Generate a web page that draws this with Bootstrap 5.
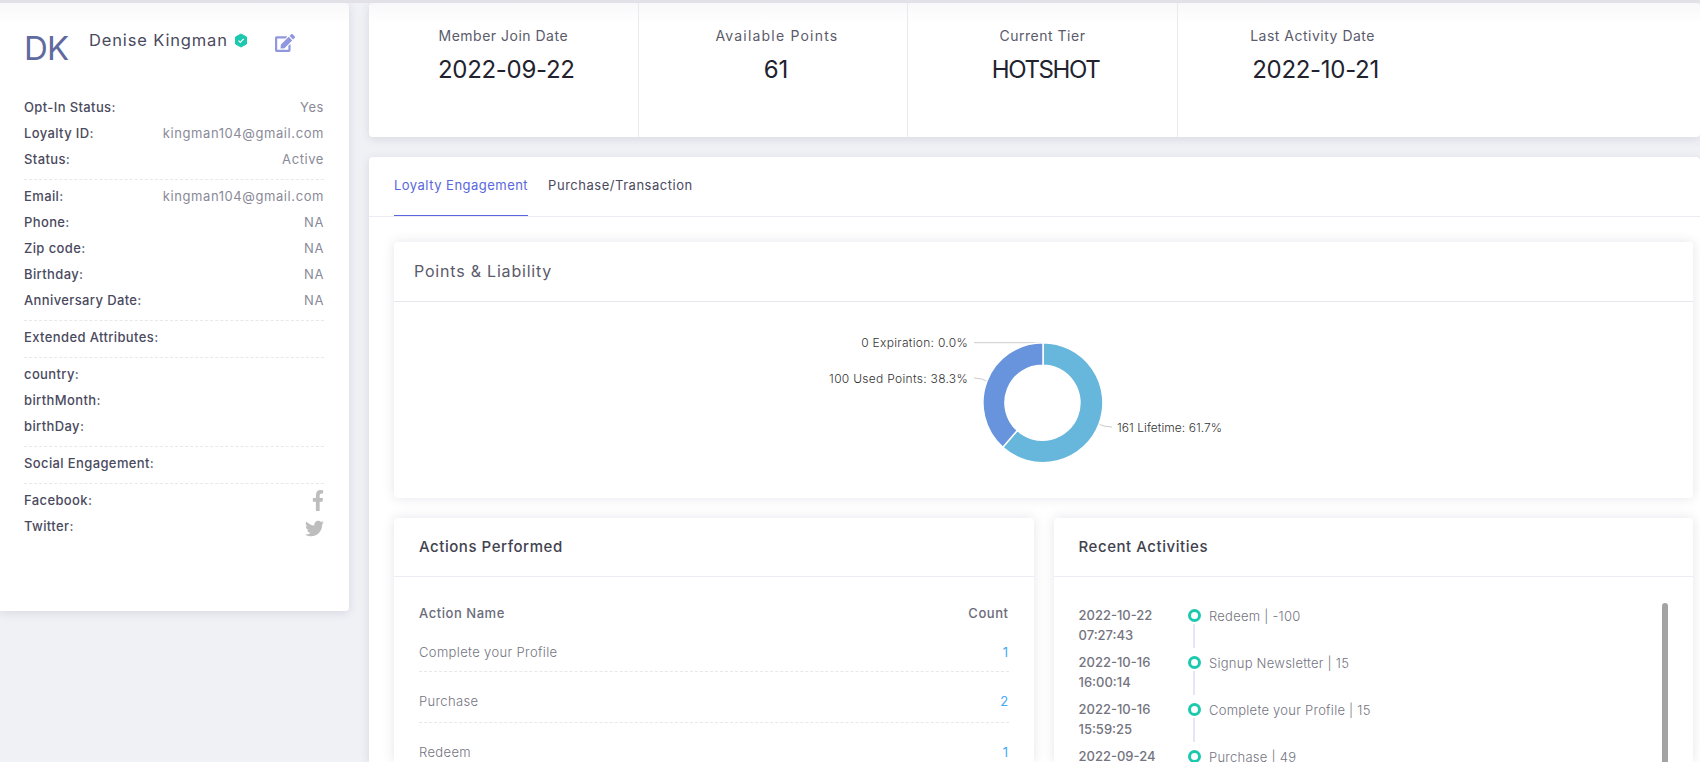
<!DOCTYPE html>
<html lang="en"><head><meta charset="utf-8"><title>Member</title>
<link href="https://cdn.jsdelivr.net/npm/bootstrap@5.3.0/dist/css/bootstrap.min.css" rel="stylesheet">
<style>
html,body{height:762px;overflow:hidden}
body{background:#f0f1f5;font-family:Inter,"Noto Sans",sans-serif;font-size:13px;color:#4a4a5e;border-top:3px solid #e1e1e7}
.shell{gap:20px;align-items:flex-start;height:759px}
.panel{background:#fff;border-radius:4px;box-shadow:0 2px 10px rgba(70,70,110,.14);position:relative}
.panel-fade{background:linear-gradient(#f8f8fa,#fff 20px)}
.side{width:349px;height:608px;flex:none;padding:0 25px 0 24px;border-radius:0 4px 4px 0}
.side-head{height:91px;position:relative}
.initials{font-size:33px;line-height:1;color:#5f6a9e;padding-top:29px;letter-spacing:-.7px;width:65px}
.who{font-size:16.500px;letter-spacing:.85px;color:#4a4a5e;padding-top:25px;width:186px;font-weight:400;white-space:nowrap}
.who svg{vertical-align:-2px;margin-left:1px}
.edit{margin-top:31px}
.info{height:26px;line-height:26px;font-weight:500;color:#4a4a5e;letter-spacing:.38px}
.info span{font-weight:400;color:#8a8a98;letter-spacing:.58px}
.bird{margin-top:4px}
.sect{border-bottom:1px dashed #e8e8ec;padding-bottom:7px;margin-bottom:3px}
.main{flex:1;min-width:0;height:759px}
.stats{height:134px}
.stat{width:269.600px;height:134px;border-right:1px solid #e9e9ee;text-align:center;padding-top:21px}
.stat:last-child{border-right:0}
.stat-label{font-size:14px;line-height:24px;color:#5b5b6b;letter-spacing:.5px}
.label-nudge{padding-left:8px;letter-spacing:1.200px}
.stat-value{font-size:24px;line-height:36px;color:#22222e;margin-top:4px;padding-left:6px;letter-spacing:-.3px}
.value-tight{letter-spacing:-1.400px}
.tabs-card{margin-top:20px;height:605px;border-radius:4px 4px 0 0;overflow:hidden}
.tabbar{height:60px;border-bottom:1px solid #ebedf3;padding-left:25px;gap:20px}
.tabitem{height:59px;line-height:56px;font-size:13px;color:#4a4a5e;letter-spacing:.52px}
.tabitem.on{color:#5867dd;border-bottom:1px solid #5867dd;letter-spacing:.48px}
.inner{padding:25px 7px 0 25px}
.box{background:#fff;border-radius:4px;box-shadow:0 0 12px rgba(70,70,110,.14)}
.points{height:256px;margin-bottom:20px}
.points-head{height:60px;line-height:59px;font-size:16px;letter-spacing:.8px;padding-left:20px;border-bottom:1px solid #e6e7ec;color:#5b5b6b}
.donut{display:block;margin:18px auto 0}
.donut text{font-family:Inter,"Noto Sans",sans-serif;font-size:12px;font-weight:300;fill:#333;letter-spacing:.3px}
.donut .slice-text{letter-spacing:.05px}
.duo{gap:20px}
.half{flex:1 1 0;min-width:0;height:244px;overflow:hidden;border-radius:4px 4px 0 0}
.half-head{height:59px;line-height:57px;font-size:15px;font-weight:500;letter-spacing:.55px;padding-left:25px;border-bottom:1px solid #ebedf3;color:#42424f}
.act-top{padding:24px 25px 0;font-weight:500;color:#6b6b7a;line-height:24px;letter-spacing:.55px;margin-bottom:-2px}
.act-row{margin:0 25px;height:51px;padding-top:19px;line-height:20px;border-bottom:1px dashed #e8e8ec;font-weight:300;color:#74747f;letter-spacing:.36px}
.act-top + .act-row{height:49px}
.act-row b{font-weight:400;color:#44a8f5}
.act-row:last-child{border-bottom:0}
.feed{padding:26px 25px 0;position:relative;height:185px}
.feed-row{height:47px}
.feed-when{width:109.500px;line-height:20px;font-weight:500;color:#74747f;padding-top:2px}
.feed-dot{width:13px;height:13px;border:3.500px solid #1dc9ae;border-radius:50%;margin-top:6px;margin-right:8px;position:relative;flex:none}
.feed-dot::after{content:"";position:absolute;left:1.500px;top:12px;width:2px;height:24px;background:#e4e6f5}
.feed-what{font-weight:300;color:#74747f;padding-top:4px;letter-spacing:.25px}
.thumb{position:absolute;right:25px;top:26px;width:6px;height:159px;background:#a3a3a3;border-radius:3px 3px 0 0}
</style></head>
<body>
<div class="d-flex shell">
<aside class="panel panel-fade side">
  <div class="side-head d-flex">
    <div class="initials">DK</div>
    <div class="who">Denise Kingman <svg width="14" height="15" viewBox="0 0 14 15"><path d="M7 1 12.500 4V11L7 14 1.500 11V4Z" fill="#1dc9ae" stroke="#1dc9ae" stroke-width="1" stroke-linejoin="round"/><path d="M4.500 7.600 6.300 9.300 9.600 5.800" fill="none" stroke="#fff" stroke-width="1.200"/></svg></div>
    <svg class="edit" width="20" height="18" viewBox="0 0 576 512"><path fill="#9197df" d="M402.6 83.2l90.2 90.2c3.8 3.8 3.8 10 0 13.8L274.4 405.6l-92.8 10.3c-12.4 1.400-22.900-9.100-21.500-21.500l10.300-92.800L388.800 83.200c3.800-3.800 10-3.800 13.800 0zm162-22.900l-48.800-48.800c-15.200-15.200-39.900-15.200-55.200 0l-35.400 35.400c-3.800 3.800-3.800 10 0 13.800l90.200 90.200c3.800 3.800 10 3.800 13.800 0l35.400-35.400c15.200-15.300 15.200-40 0-55.200zM384 346.200V448H64V128h229.800c3.200 0 6.200-1.300 8.500-3.500l40-40c7.600-7.600 2.200-20.500-8.500-20.500H48C21.500 64 0 85.500 0 112v352c0 26.500 21.500 48 48 48h352c26.500 0 48-21.500 48-48V306.200c0-10.700-12.900-16-20.500-8.500l-40 40c-2.200 2.300-3.500 5.300-3.500 8.500z"/></svg>
  </div>
  <div class="sect">
    <div class="info d-flex justify-content-between">Opt-In Status:<span>Yes</span></div>
    <div class="info d-flex justify-content-between">Loyalty ID:<span>kingman104@gmail.com</span></div>
    <div class="info d-flex justify-content-between">Status:<span>Active</span></div>
  </div>
  <div class="sect">
    <div class="info d-flex justify-content-between">Email:<span>kingman104@gmail.com</span></div>
    <div class="info d-flex justify-content-between">Phone:<span>NA</span></div>
    <div class="info d-flex justify-content-between">Zip code:<span>NA</span></div>
    <div class="info d-flex justify-content-between">Birthday:<span>NA</span></div>
    <div class="info d-flex justify-content-between">Anniversary Date:<span>NA</span></div>
  </div>
  <div class="sect"><div class="info">Extended Attributes:</div></div>
  <div class="sect">
    <div class="info">country:</div>
    <div class="info">birthMonth:</div>
    <div class="info">birthDay:</div>
  </div>
  <div class="sect"><div class="info">Social Engagement:</div></div>
  <div class="info d-flex justify-content-between align-items-center">Facebook:<svg width="12" height="21" viewBox="0 0 320 512" preserveAspectRatio="none"><path fill="#bdbdbd" d="M279.14 288l14.220-92.660h-88.910v-60.130c0-25.350 12.420-50.060 52.240-50.060h40.420V6.260S260.430 0 225.360 0c-73.220 0-121.080 44.380-121.080 124.720v70.620H22.890V288h81.390v224h100.170V288z"/></svg></div>
  <div class="info d-flex justify-content-between align-items-center">Twitter:<svg class="bird" width="19" height="19" viewBox="0 0 512 512"><path fill="#bdbdbd" d="M459.370 151.716c.325 4.548.325 9.097.325 13.645 0 138.720-105.583 298.558-298.558 298.558-59.452 0-114.680-17.219-161.137-47.106 8.447.974 16.568 1.299 25.340 1.299 49.055 0 94.213-16.568 130.274-44.832-46.132-.975-84.792-31.188-98.112-72.772 6.498.974 12.995 1.624 19.818 1.624 9.421 0 18.843-1.300 27.614-3.573-48.081-9.747-84.143-51.980-84.143-102.985v-1.299c13.969 7.797 30.214 12.670 47.431 13.319-28.264-18.843-46.781-51.005-46.781-87.391 0-19.492 5.197-37.360 14.294-52.954 51.655 63.675 129.300 105.258 216.365 109.807-1.624-7.797-2.599-15.918-2.599-24.040 0-57.828 46.782-104.934 104.934-104.934 30.213 0 57.502 12.670 76.670 33.137 23.715-4.548 46.456-13.320 66.599-25.340-7.798 24.366-24.366 44.833-46.132 57.827 21.117-2.273 41.584-8.122 60.426-16.243-14.292 20.791-32.161 39.308-52.628 54.253z"/></svg></div>
</aside>
<main class="main">
  <section class="panel panel-fade stats d-flex">
    <div class="stat"><div class="stat-label">Member Join Date</div><div class="stat-value">2022-09-22</div></div>
    <div class="stat"><div class="stat-label label-nudge">Available Points</div><div class="stat-value">61</div></div>
    <div class="stat"><div class="stat-label">Current Tier</div><div class="stat-value value-tight">HOTSHOT</div></div>
    <div class="stat"><div class="stat-label">Last Activity Date</div><div class="stat-value">2022-10-21</div></div>
  </section>
  <section class="panel tabs-card">
    <div class="tabbar d-flex">
      <div class="tabitem on">Loyalty Engagement</div>
      <div class="tabitem">Purchase/Transaction</div>
    </div>
    <div class="inner">
      <div class="box points">
        <div class="points-head">Points &amp; Liability</div>
        <svg class="donut" width="527" height="170" viewBox="0 0 527 170">
          <path d="M194 22.700H263" fill="none" stroke="#ccc"/>
          <path d="M194 58Q202 58 209 62" fill="none" stroke="#ccc"/>
          <path d="M318 104Q325 107 332 107" fill="none" stroke="#ccc"/>
          <path d="M263 22.700A60 60 0 1 1 222.800 127.300L237.300 110.500A37.500 37.500 0 1 0 263 45.200Z" fill="#67b7dc" stroke="#fff" stroke-width="1.500"/>
          <path d="M263 22.700A60 60 0 0 0 222.800 127.300L237.300 110.500A37.500 37.500 0 0 1 263 45.200Z" fill="#6794dc" stroke="#fff" stroke-width="1.500"/>
          <text x="188" y="27" text-anchor="end">0 Expiration: 0.0%</text>
          <text x="188" y="63" text-anchor="end">100 Used Points: 38.3%</text>
          <text class="slice-text" x="337" y="112">161 Lifetime: 61.7%</text>
        </svg>
      </div>
      <div class="duo d-flex">
        <div class="box half">
          <div class="half-head">Actions Performed</div>
          <div class="act-top d-flex justify-content-between"><span>Action Name</span><span>Count</span></div>
          <div class="act-row d-flex justify-content-between"><span>Complete your Profile</span><b>1</b></div>
          <div class="act-row d-flex justify-content-between"><span>Purchase</span><b>2</b></div>
          <div class="act-row d-flex justify-content-between"><span>Redeem</span><b>1</b></div>
        </div>
        <div class="box half">
          <div class="half-head">Recent Activities</div>
          <div class="feed">
            <div class="feed-row d-flex"><div class="feed-when">2022-10-22<br>07:27:43</div><div class="feed-dot"></div><div class="feed-what">Redeem | -100</div></div>
            <div class="feed-row d-flex"><div class="feed-when">2022-10-16<br>16:00:14</div><div class="feed-dot"></div><div class="feed-what">Signup Newsletter | 15</div></div>
            <div class="feed-row d-flex"><div class="feed-when">2022-10-16<br>15:59:25</div><div class="feed-dot"></div><div class="feed-what">Complete your Profile | 15</div></div>
            <div class="feed-row d-flex"><div class="feed-when">2022-09-24</div><div class="feed-dot"></div><div class="feed-what">Purchase | 49</div></div>
            <div class="thumb"></div>
          </div>
        </div>
      </div>
    </div>
  </section>
</main>
</div>
<script src="https://cdn.jsdelivr.net/npm/bootstrap@5.3.0/dist/js/bootstrap.bundle.min.js"></script>
</body></html>
